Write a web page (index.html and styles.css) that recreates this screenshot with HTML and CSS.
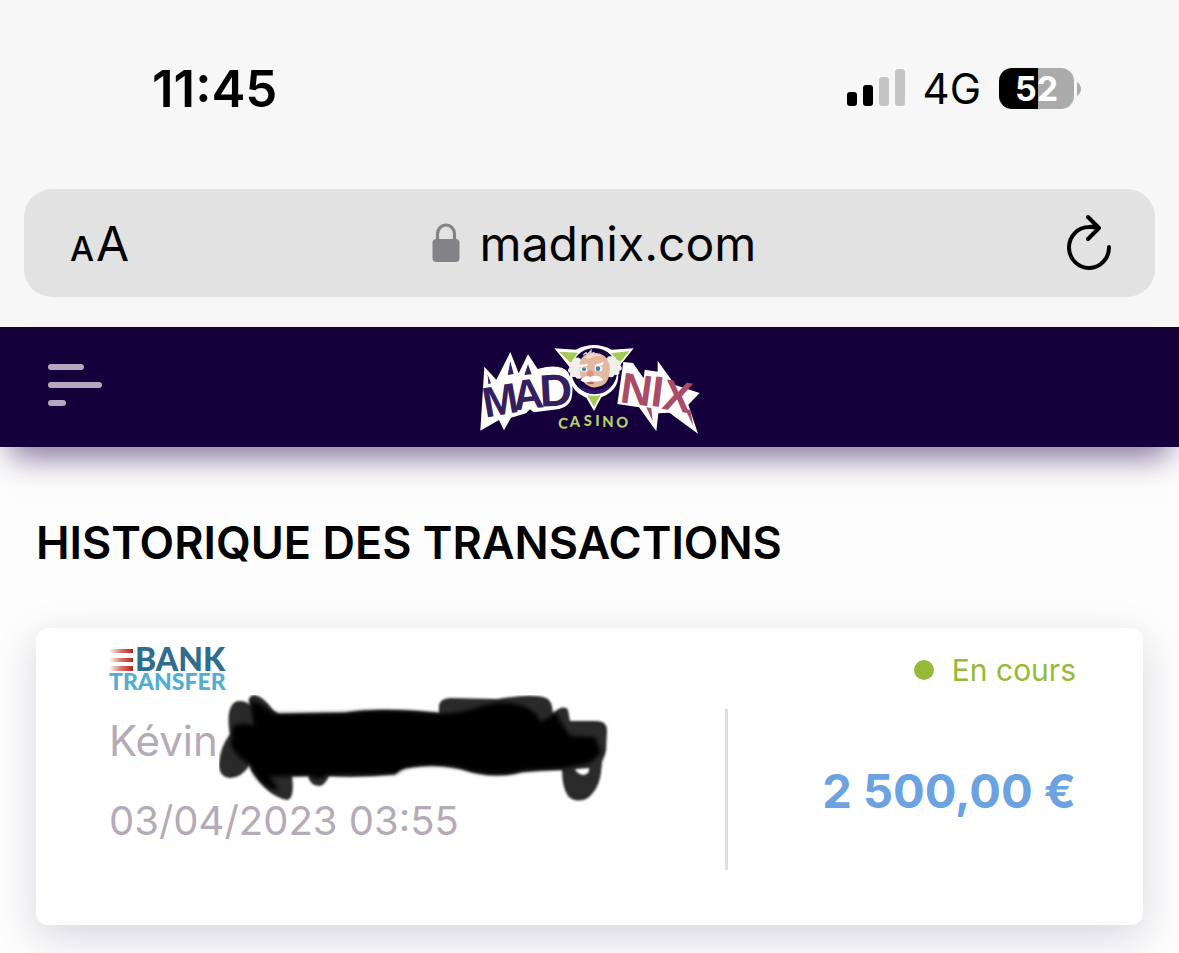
FILE: index.html
```html
<!DOCTYPE html>
<html lang="fr">
<head>
<meta charset="utf-8">
<meta name="viewport" content="width=device-width, initial-scale=1">
<title>Historique des transactions</title>
<link rel="stylesheet" href="styles.css">
</head>
<body>
<div class="browser">
  <div class="status-bar">
    <time class="clock">11:45</time>
    <div class="indicators">
      <svg class="signal" viewBox="0 0 58 38" aria-hidden="true">
        <rect x="0" y="23" width="10" height="14" rx="3"/>
        <rect x="16" y="16" width="10" height="21" rx="3"/>
        <rect x="32" y="8" width="10" height="29" rx="3" fill="#c5c5c5"/>
        <rect x="48" y="0" width="10" height="37" rx="3" fill="#c5c5c5"/>
      </svg>
      <span class="network">4G</span>
      <div class="battery"><span class="battery-level">52</span><svg class="battery-tip" viewBox="0 0 4 14" aria-hidden="true"><path d="M0 0Q4 3 4 7T0 14Z" fill="#ababab"/></svg></div>
    </div>
  </div>
  <div class="address-bar">
    <button class="text-size" type="button" aria-label="Taille du texte"><span class="small-a">A</span><span class="large-a">A</span></button>
    <label class="address">
      <svg class="lock" viewBox="0 0 28 40" role="img" aria-label="Adresse sécurisée"><path d="M5.500 18V11a8.500 9 0 0 1 17 0v7" fill="none" stroke="#838287" stroke-width="3.200"/><rect x="0.500" y="16" width="27" height="23" rx="4" fill="#838287"/></svg>
      <input class="address-input" type="text" value="madnix.com">
    </label>
    <button class="reload" type="button" aria-label="Actualiser">
      <svg viewBox="0 0 46 56" fill="none" stroke="#000" stroke-width="4" stroke-linecap="round" stroke-linejoin="round"><path d="M43 32A20 20.500 0 1 1 23 12Q28 11.500 33 13M22 2L33 13L22 24"/></svg>
    </button>
  </div>
</div>
<header class="site-header">
  <button class="menu" type="button" aria-label="Menu"><span class="line line-medium"></span><span class="line"></span><span class="line line-short"></span></button>
  <a class="brand" href="#" aria-label="Madnix Casino">
    <svg viewBox="54 27 663 288">
      <path d="M58 302L70 110L106 149L148 66L173 130L201 73L230 117Q300 98 322 128Q341 167 331 207Q321 237 272 240L218 247L207 238L195 250L150 263L129 301L114 270Z" fill="#fff"/>
      <path d="M469 222L487 96L516 99L548 145L551 119L590 125V92L642 165L716 189L682 224L711 311L625 248L592 250L586 304L534 232Z" fill="#fff"/>
      <path d="M90 160L80 134L82 162ZM140 135L148 94L158 132ZM190 135L201 103L212 133Z" fill="#34205f"/>
      <path d="M556 232L575 274L571 234ZM672 236L697 289L688 240Z" fill="#aa4b68"/>
      <g class="logo-word" fill="#34205f">
        <text x="73" y="263" font-size="128" transform="rotate(-10 73 263)">M</text>
        <text x="160" y="242" font-size="128" transform="rotate(-7 160 242)">A</text>
        <text x="238" y="230" font-size="136" transform="rotate(-3 238 230)">D</text>
      </g>
      <g class="logo-word" font-size="130" fill="#aa4b68">
        <text x="474" y="216" transform="rotate(8 474 216)">N</text>
        <text x="566" y="227" transform="rotate(7 566 227)">I</text>
        <text x="600" y="236" transform="rotate(9 600 236)">X</text>
      </g>
      <path d="M280 55L345 59Q398 31 452 59L518 55L469 116Q484 176 421 202L399 243L376 203Q315 177 330 116Z" fill="#fff"/>
      <path d="M294 65L350 68L330 99ZM505 64L451 69L475 99ZM379 194L399 231L419 194Q399 201 379 194Z" fill="#a4c954"/>
      <circle cx="400" cy="123" r="69" fill="#160340"/>
      <path d="M352 166Q400 195 452 166Q438 192 400 193Q365 190 352 166Z" fill="#34136d"/>
      <path d="M354 83Q334 81 333 97Q316 100 326 112Q314 124 329 130Q323 143 343 141Q350 151 362 143L370 96ZM443 79Q467 77 466 89Q484 93 478 105Q489 117 475 123Q478 138 461 134Q454 148 440 137L431 91Z" fill="#f1efee"/>
      <path d="M357 97Q363 68 400 68Q436 69 445 102Q451 151 425 166Q397 180 374 163Q351 146 357 97Z" fill="#e6b7a0"/>
      <path d="M369 82Q391 62 424 78Q406 76 391 84Q381 89 369 82Z" fill="#f5d4c0"/>
      <path d="M367 74L375 68L379 74L390 62L389 72L400 67" fill="none" stroke="#ddd" stroke-width="4"/>
      <path d="M355 106L379 101L381 107L357 111ZM401 106L428 96L426 104L402 111Z" fill="#fff"/>
      <ellipse cx="368" cy="118" rx="11" ry="8" fill="#f8ffff"/><circle cx="369" cy="118" r="6" fill="#477da9"/>
      <ellipse cx="412" cy="116" rx="12" ry="8" fill="#f8ffff"/><circle cx="411" cy="116" r="7" fill="#4683ad"/>
      <path d="M379 127Q389 115 397 127Q400 140 386 142Q374 139 379 127Z" fill="#d99380"/>
      <path d="M358 151Q371 134 388 141Q411 131 427 149Q413 158 390 153Q371 162 358 151Z" fill="#fff"/>
      <path d="M376 158Q388 154 402 158Q389 168 376 158Z" fill="#ad655c"/>
      <g class="logo-casino" font-size="44" fill="#b3d268"><text x="290" y="294" transform="rotate(5 290 294)">C</text><text x="326" y="290">A</text><text x="368" y="289">S</text><text x="403" y="289">I</text><text x="424" y="290">N</text><text x="467" y="294" transform="rotate(-5 467 294)">O</text></g>
    </svg>
  </a>
</header>
<main class="content">
  <h1 class="title">HISTORIQUE DES TRANSACTIONS</h1>
  <article class="transaction">
    <div class="details">
      <svg class="bank-logo" viewBox="0 0 120 43" role="img" aria-label="Bank Transfer">
        <defs><linearGradient id="stripe"><stop stop-color="#fff"/><stop offset=".5" stop-color="#d8756c"/><stop offset="1" stop-color="#b42322"/></linearGradient></defs>
        <path d="M0 1H24V5H0ZM0 10H24V14H0ZM0 18H24V23H0Z" fill="url(#stripe)"/>
        <text class="bank-word" x="26" y="23" font-size="32" fill="#2f6c8d">BANK</text>
        <text class="bank-word" x="0" y="42" font-size="23" fill="#51add2">TRANSFER</text>
      </svg>
      <p class="payee">Kévin
        <svg class="redaction" viewBox="0 0 390 110" aria-hidden="true">
          <defs>
            <filter id="soft"><feGaussianBlur stdDeviation="0.800"/></filter>
            <filter id="core"><feGaussianBlur stdDeviation="2"/></filter>
          </defs>
          <path filter="url(#soft)" d="M11 39C8 24 9 7 20 6Q28 6 32 11Q27 3 34 0Q43 0 54 15L60 19L126 18Q163 12 220 18V10Q221 4 231 3L278 4Q315-2 327 3Q333 5 334 18Q345 9 349 15L351 26H378Q388 26 388 36L387 56Q386 61 383 67C382 80 381 93 369 103Q357 109 349 101Q343 92 343 75Q318 75 303 77Q274 85 242 74Q216 68 194 72Q180 73 176 79Q145 83 110 81Q106 90 101 91Q91 91 89 81H73Q76 104 68 105Q51 102 37 82Q30 74 31 70Q22 83 11 83Q0 82 0 69Q1 52 11 39ZM356 74Q358 79 364 80Q371 79 370 73Z" fill="#292929" fill-rule="evenodd"/>
          <path filter="url(#core)" d="M14 31Q25 26 35 31L31 5Q44 8 55 19L126 18Q163 13 220 19Q245 18 262 11Q290 3 311 14Q321 22 322 27L337 18Q342 28 351 41L376 42L382 57Q376 66 367 69L345 73L303 76Q274 84 242 73Q211 67 185 73L176 79L108 80Q98 87 91 80L50 82L61 95Q48 96 36 80L31 69Q19 65 12 50Z"/>
        </svg>
      </p>
      <time class="date" datetime="2023-04-03T03:55">03/04/2023 03:55</time>
    </div>
    <div class="summary">
      <p class="state">En cours</p>
      <p class="amount">2 500,00 €</p>
    </div>
  </article>
</main>
</body>
</html>
```
FILE: styles.css
```css
* { box-sizing: border-box; }
body { margin: 0; background: #fdfdfd; color: #000; font-family: Inter, "Noto Sans", sans-serif; }
button { padding: 0; border: 0; background: none; color: inherit; font: inherit; }
p, h1 { margin: 0; }
svg { display: block; }
.browser { padding: 64px 24px 30px; background: #f7f7f7; }
.status-bar { display: flex; align-items: center; justify-content: space-between; height: 48px; margin-bottom: 77px; padding: 0 81px 0 128px; }
.clock { font-size: 51px; font-weight: 600; }
.indicators { display: flex; align-items: center; gap: 18px; }
.signal { width: 58px; height: 38px; }
.network { font-size: 42px; }
.battery { position: relative; }
.battery-level { display: block; width: 75px; border-radius: 13px; background: linear-gradient(90deg, #000 39px, #ababab 39px); color: #fff; font-size: 34px; font-weight: 700; line-height: 41px; text-align: center; }
.battery-tip { position: absolute; top: 14px; left: 78px; width: 4px; height: 14px; }
.address-bar { display: flex; align-items: center; justify-content: space-between; height: 108px; padding: 0 43px 0 46px; border-radius: 28px; background: #e2e2e2; }
.text-size { display: flex; align-items: baseline; gap: 2px; }
.small-a { font-size: 34px; font-weight: 500; }
.large-a { font-size: 48px; }
.address { display: flex; align-items: center; gap: 20px; }
.lock { width: 28px; height: 40px; }
.address-input { width: 284px; padding: 0; border: 0; outline: 0; background: none; color: #000; font: 48px Inter, sans-serif; }
.reload { width: 46px; height: 56px; }
.reload svg { overflow: visible; }
.site-header { position: relative; display: grid; grid-template-columns: 1fr auto 1fr; align-items: center; height: 120px; padding: 0 48px; background: #15003c; box-shadow: 0 20px 30px -10px rgba(45, 20, 85, .6); }
.menu { display: grid; gap: 12px; width: 54px; padding-bottom: 4px; }
.line { height: 6px; border-radius: 3px; background: #b5a7bd; }
.line-medium { width: 36px; }
.line-short { width: 18px; }
.brand svg { width: 221px; height: 96px; overflow: visible; }
.logo-word { font-family: "Liberation Sans", sans-serif; font-weight: 700; }
.logo-casino { font-family: Lato, sans-serif; font-weight: 900; }
.content { padding: 66px 36px 28px; }
.title { margin-bottom: 55px; font-size: 45px; font-weight: 600; line-height: 60px; }
.transaction { display: flex; justify-content: space-between; padding: 20px 67px 55px 73px; border-radius: 12px; background: #fff; box-shadow: 0 12px 40px rgba(30, 20, 70, .17); }
.details { padding-bottom: 9px; color: #b5aab8; font-size: 42px; line-height: 80px; }
.bank-logo { width: 120px; height: 43px; margin-bottom: 10px; overflow: visible; }
.bank-word { font-family: Lato, sans-serif; font-weight: 900; }
.payee { position: relative; }
.redaction { position: absolute; top: -6px; left: 110px; width: 390px; height: 110px; }
.date { display: block; font-size: 40px; }
.summary { position: relative; width: 351px; text-align: right; }
.summary::before { content: ""; position: absolute; top: 61px; bottom: 0; left: 0; width: 3px; background: #dfdee3; }
.state { display: flex; align-items: center; justify-content: flex-end; gap: 18px; margin-bottom: 59px; color: #94ba38; font-size: 30px; line-height: 44px; }
.state::before { content: ""; width: 20px; height: 20px; border-radius: 50%; background: currentColor; }
.amount { color: #6ba2e1; font-size: 47px; font-weight: 700; line-height: 80px; }
```
